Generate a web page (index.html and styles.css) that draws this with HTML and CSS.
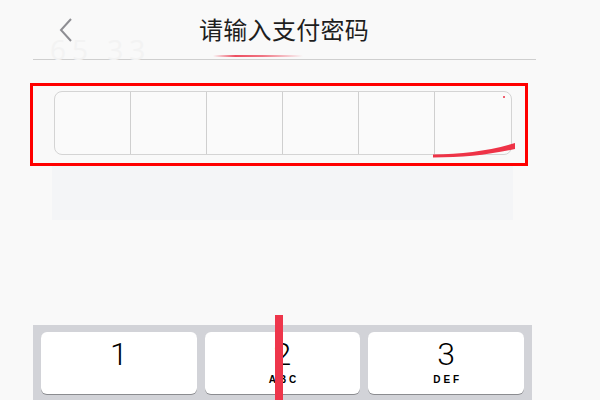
FILE: index.html
```html
<!DOCTYPE html>
<html lang="zh">
<head>
<meta charset="utf-8">
<link rel="stylesheet" href="styles.css">
</head>
<body>
<div class="page">
  <header class="header">
    <svg class="back" width="16" height="26" viewBox="0 0 16 26"><path d="M13 2 L3 13 L13 24" fill="none" stroke="#8e8e93" stroke-width="2"/></svg>
    <span class="ghost">65 33</span>
    <h1 class="title">请输入支付密码</h1>
  </header>
  <div class="frame">
    <div class="pwd">
      <div class="cell"></div>
      <div class="cell"></div>
      <div class="cell"></div>
      <div class="cell"></div>
      <div class="cell"></div>
      <div class="cell"></div>
    </div>
    <svg class="swoosh" width="84" height="16" viewBox="0 0 84 16"><path d="M0 12.5 C30 12 55 9 82 1 L82 7 C55 13 30 15.5 0 15.5 Z" fill="#ee3347"/></svg>
    <span class="dot"></span>
  </div>
  <div class="panel"></div>
  <div class="keyboard">
    <div class="key"><span class="num">1</span></div>
    <div class="key"><span class="num">2</span><span class="letters">ABC</span></div>
    <div class="key"><span class="num">3</span><span class="letters">DEF</span></div>
  </div>
  <div class="marker"></div>
</div>
</body>
</html>
```
FILE: styles.css
```css
html, body {
  margin: 0;
  padding: 0;
  background: #f9f9f9;
  font-family: "Noto Sans CJK SC", "Noto Sans", sans-serif;
}
.page {
  position: relative;
  width: 600px;
  height: 400px;
  overflow: hidden;
}
.header {
  position: relative;
  height: 59px;
  margin: 0 64px 0 33px;
  border-bottom: 1px solid #cfcfcf;
  display: flex;
  align-items: center;
}
.back {
  margin-left: 25px;
  margin-top: 0;
}
.ghost {
  position: absolute;
  left: 17px;
  top: 30px;
  font-family: "Open Sans", sans-serif;
  font-size: 28px;
  color: #f3f3f3;
  letter-spacing: 6px;
}
.title {
  margin: -2px 0 0 125px;
  font-size: 24px;
  font-weight: 400;
  color: #1e1e1e;
  letter-spacing: 0.3px;
  position: relative;
}
.title::after {
  content: "";
  position: absolute;
  left: 14px;
  top: 44px;
  width: 90px;
  height: 2px;
  background: linear-gradient(90deg, rgba(236,70,90,0), rgba(236,60,80,0.9) 25%, rgba(236,60,80,0.7) 55%, rgba(236,60,80,0));
}
.frame {
  position: relative;
  margin: 23px 0 0 30px;
  width: 471px;
  height: 72px;
  border: 3px solid #ff0000;
  padding: 5px 0 0 21px;
}
.pwd {
  width: 456px;
  height: 62px;
  border: 1px solid #d4d4d4;
  border-radius: 8px;
  background: #fafafa;
  display: grid;
  grid-template-columns: repeat(6, 1fr);
}
.cell {
  border-right: 1px solid #cfcfcf;
}
.cell:last-child {
  border-right: none;
}
.swoosh {
  position: absolute;
  left: 400px;
  top: 56px;
}
.dot {
  position: absolute;
  left: 470px;
  top: 10px;
  width: 2px;
  height: 2px;
  background: #f06070;
}
.panel {
  margin-left: 52px;
  width: 461px;
  height: 54px;
  background: #f4f5f7;
}
.keyboard {
  margin: 105px 0 0 33px;
  width: 483px;
  padding: 7px 8px 20px;
  background: #d2d3d8;
  display: grid;
  grid-template-columns: repeat(3, 1fr);
  gap: 8px;
}
.key {
  height: 62px;
  background: #ffffff;
  border-radius: 6px;
  box-shadow: 0 1px 0 #8b8c90;
  display: flex;
  flex-direction: column;
  align-items: center;
}
.num {
  font-family: Roboto, "Open Sans", sans-serif;
  font-weight: 300;
  font-size: 32px;
  line-height: 32px;
  margin-top: 6px;
  color: #000;
}
.letters {
  font-family: "Liberation Sans", Arial, sans-serif;
  font-weight: 700;
  font-size: 10px;
  letter-spacing: 3px;
  margin-top: 4px;
  margin-right: -3px;
  color: #000;
}
.marker {
  position: absolute;
  left: 275px;
  top: 315px;
  width: 8px;
  height: 85px;
  background: #ee364b;
}
```
